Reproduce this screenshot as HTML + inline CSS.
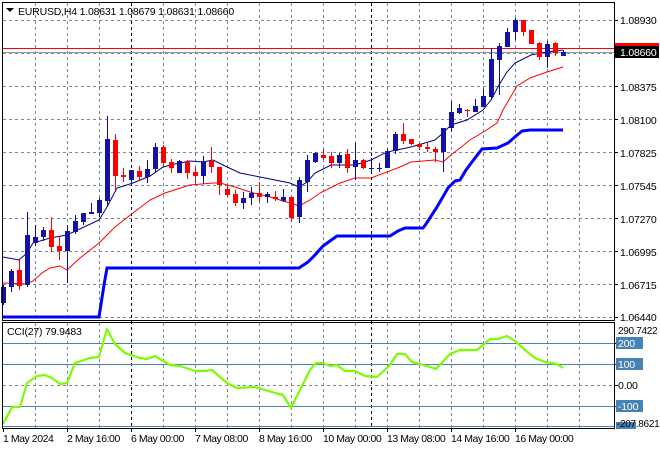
<!DOCTYPE html>
<html><head><meta charset="utf-8"><style>
html,body{margin:0;padding:0;background:#fff;width:660px;height:450px;overflow:hidden}
svg{display:block}
text{font-family:"Liberation Sans",sans-serif;font-size:10.5px;fill:#000;letter-spacing:-0.2px}
.d{letter-spacing:-0.45px}
.r{font-size:10px;letter-spacing:-0.3px}
</style></head><body>
<svg width="660" height="450" viewBox="0 0 660 450" xmlns="http://www.w3.org/2000/svg">
<rect width="660" height="450" fill="#fff"/>
<g stroke="#778899" stroke-width="1" stroke-dasharray="3,3" fill="none">
<path d="M3 20.5H614M3 53.5H614M3 86.5H614M3 119.5H614M3 152.5H614M3 185.5H614M3 218.5H614M3 251.5H614M3 284.5H614M3 317.5H614"/>
<path d="M35.5 3V320M67.5 3V320M99.5 3V320M163.5 3V320M195.5 3V320M227.5 3V320M259.5 3V320M291.5 3V320M323.5 3V320M355.5 3V320M387.5 3V320M419.5 3V320M451.5 3V320M483.5 3V320M515.5 3V320M547.5 3V320M579.5 3V320"/>
<path d="M35.5 323V428M67.5 323V428M99.5 323V428M163.5 323V428M195.5 323V428M227.5 323V428M259.5 323V428M291.5 323V428M323.5 323V428M355.5 323V428M387.5 323V428M419.5 323V428M451.5 323V428M483.5 323V428M515.5 323V428M547.5 323V428M579.5 323V428"/>
<path d="M3 385.5H614"/>
</g>
<g stroke="#000" stroke-dasharray="3,3"><path d="M131.5 3V428M371.5 3V428"/></g>
<g stroke="#4682B4" stroke-width="1"><path d="M3 343.5H614M3 364.5H614M3 406.5H614M3 426.5H614"/></g>
<path d="M3 48.5H614" stroke="#f00"/>
<path d="M3 52.5H614" stroke="#999"/>
<polyline fill="none" stroke="#0000ff" stroke-width="3" points="3,317 99,317 104,285 107,268 299,268 308,262 315,255 323,246 330,241 337,236 390,236 398,231 405,228 423,228 426,224 437,207 448,188 455,181 460,180 466,170 475,158 482,149 497,148 508,143 516,136 522,131 530,130 563,130"/>
<polyline fill="none" stroke="#f00" stroke-width="1" points="3,283 27,284 33,281 42,273 50,268 60,266 67,270 80,258 99,243 115,227 133,213 150,200 165,193 190,185 213,183 220,183 235,187 250,192 270,197 290,203 299,206 310,200 320,193 340,183 355,178 371,178 387,172 400,167 411,162 435,160 443,162 451,155 460,148 470,140 485,131 497,123 503,110 510,98 517,86 530,78 547,72 563,67"/>
<polyline fill="none" stroke="#000080" stroke-width="1" points="3,257 19,260 27,253 33,243 50,238 67,235 99,220 107,207 117,188 133,183 150,176 163,167 175,164 190,161 203,162 213,160 225,166 240,173 260,177 290,183 299,187 307,182 315,173 331,165 355,165 371,160 387,152 411,147 435,140 443,133 451,125 467,120 483,110 491,100 499,85 507,72 515,63 531,55 547,52 563,50"/>
<path stroke="#0A0AA0" stroke-width="1" fill="none" d="M3.5 285V305M11.5 269V292M27.5 212V287M35.5 225V246M43.5 227V241M67.5 225V283M75.5 215V234M83.5 213V225M91.5 203V214M99.5 198V217M107.5 116V207M131.5 170V185M147.5 160V183M155.5 143V173M179.5 160V173M203.5 156V184M243.5 192V209M251.5 187V205M267.5 192V203M283.5 189V202M299.5 177V223M307.5 155V192M315.5 152V163M339.5 153V168M355.5 143V180M371.5 158V172M379.5 163V172M387.5 149V168M395.5 132V154M443.5 128V172M451.5 101V132M459.5 104V114M475.5 99V112M483.5 89V107M491.5 48V100M499.5 43V95M507.5 28V47M515.5 18V40M547.5 41V68M563.5 50V56"/>
<path fill="#1212A8" d="M1 287h5v16h-5zM9 271h5v16h-5zM25 235h5v50h-5zM33 237h5v6h-5zM41 230h5v7h-5zM65 231h5v20h-5zM73 221h5v11h-5zM81 213h5v9h-5zM89 212h5v2h-5zM97 200h5v13h-5zM105 139h5v62h-5zM129 170h5v10h-5zM145 169h5v8h-5zM153 147h5v22h-5zM177 161h5v12h-5zM201 161h5v15h-5zM241 198h5v5h-5zM249 193h5v5h-5zM265 194h5v3h-5zM281 197h5v4h-5zM297 180h5v37h-5zM305 160h5v22h-5zM313 153h5v9h-5zM337 155h5v8h-5zM353 160h5v7h-5zM369 168h5v1h-5zM377 168h5v1h-5zM385 151h5v17h-5zM393 134h5v17h-5zM441 128h5v24h-5zM449 112h5v16h-5zM457 108h5v5h-5zM473 106h5v6h-5zM481 96h5v11h-5zM489 59h5v38h-5zM497 46h5v14h-5zM505 32h5v15h-5zM513 20h5v12h-5zM545 44h5v13h-5zM561 52h5v4h-5z"/>
<path stroke="#f00" stroke-width="1" fill="none" d="M19.5 260V290M51.5 217V252M59.5 236V260M115.5 134V190M123.5 168V182M139.5 166V180M163.5 145V166M171.5 159V173M187.5 160V179M195.5 167V183M211.5 147V173M219.5 167V195M227.5 185V197M235.5 190V206M259.5 182V202M275.5 191V201M291.5 197V222M323.5 149V160M331.5 152V168M347.5 149V173M363.5 159V169M403.5 123V144M411.5 139V145M419.5 143V150M427.5 143V152M435.5 147V162M467.5 109V117M523.5 20V36M531.5 30V44M539.5 42V60M555.5 42V56"/>
<path fill="#f00" d="M17 270h5v16h-5zM49 230h5v17h-5zM57 246h5v5h-5zM113 140h5v36h-5zM121 175h5v2h-5zM137 171h5v6h-5zM161 147h5v16h-5zM169 162h5v6h-5zM185 162h5v11h-5zM193 172h5v4h-5zM209 161h5v6h-5zM217 167h5v18h-5zM225 189h5v6h-5zM233 194h5v9h-5zM257 193h5v4h-5zM273 197h5v2h-5zM289 197h5v21h-5zM321 155h5v3h-5zM329 156h5v7h-5zM345 154h5v14h-5zM361 160h5v8h-5zM401 134h5v7h-5zM409 139h5v5h-5zM417 144h5v3h-5zM425 147h5v2h-5zM433 149h5v3h-5zM465 110h5v1h-5zM521 20h5v12h-5zM529 30h5v14h-5zM537 43h5v14h-5zM553 43h5v10h-5z"/>
<polyline fill="none" stroke="#7CFC00" stroke-width="2.2" stroke-linejoin="round" points="3,424 12,407 20,407 27,383 37,376 45,375 52,378 60,384 67,383 75,363 90,358 99,357 107,329 115,344 125,353 140,358 147,359 155,356 170,365 180,366 195,371 205,371 212,370 227,383 237,388 255,387 275,393 283,395 291,408 300,390 310,370 316,363 323,363 330,366 337,365 345,371 355,371 365,376 377,377 390,365 397,354 405,354 412,362 420,364 430,367 436,369 450,354 460,350 477,350 490,339 498,339 507,336 515,341 525,350 535,358 545,362 557,364 563,368"/>
<g stroke="#000" stroke-width="1" fill="none">
<rect x="2.5" y="2.5" width="612" height="318"/>
<rect x="2.5" y="322.5" width="612" height="106"/>
</g>
<g stroke="#000"><path d="M614 20.5h4M614 53.5h4M614 86.5h4M614 119.5h4M614 152.5h4M614 185.5h4M614 218.5h4M614 251.5h4M614 284.5h4M614 317.5h4M614 343.5h4M614 364.5h4M614 385.5h4M614 406.5h4"/></g>
<g stroke="#000"><path d="M3.5 428v4M67.5 428v4M131.5 428v4M195.5 428v4M259.5 428v4M323.5 428v4M387.5 428v4M451.5 428v4M515.5 428v4"/></g>
<path d="M6 8h8l-4 4z" fill="#000"/>
<text x="18" y="15">EURUSD,H4  1.08631 1.08679 1.08631 1.08660</text>
<text x="7" y="335">CCI(27) 79.9483</text>
<text x="620" y="24">1.08930</text>
<rect x="615" y="43" width="44" height="8" fill="#f00"/>
<rect x="615" y="46" width="44" height="12" fill="#000"/>
<text x="620" y="56" style="fill:#fff">1.08660</text>
<text x="620" y="91">1.08375</text>
<text x="620" y="124">1.08100</text>
<text x="620" y="157">1.07825</text>
<text x="620" y="190">1.07545</text>
<text x="620" y="223">1.07270</text>
<text x="620" y="256">1.06995</text>
<text x="620" y="289">1.06715</text>
<text x="620" y="321">1.06440</text>
<text class="r" x="618" y="334">290.7422</text>
<rect x="616" y="337" width="27" height="12" fill="#4682B4"/>
<text x="618" y="347" style="fill:#fff">200</text>
<rect x="616" y="358" width="27" height="12" fill="#4682B4"/>
<text x="618" y="368" style="fill:#fff">100</text>
<text x="618" y="389">0.00</text>
<rect x="616" y="400" width="27" height="12" fill="#4682B4"/>
<text x="618" y="410" style="fill:#fff">-100</text>
<rect x="616" y="422" width="20" height="7" fill="#4682B4"/>
<text class="r" x="617" y="427">-207.8621</text>
<text class="d" x="3" y="442">1 May 2024</text>
<text class="d" x="67" y="442">2 May 16:00</text>
<text class="d" x="131" y="442">6 May 00:00</text>
<text class="d" x="195" y="442">7 May 08:00</text>
<text class="d" x="259" y="442">8 May 16:00</text>
<text class="d" x="323" y="442">10 May 00:00</text>
<text class="d" x="387" y="442">13 May 08:00</text>
<text class="d" x="451" y="442">14 May 16:00</text>
<text class="d" x="515" y="442">16 May 00:00</text>
</svg>
</body></html>
